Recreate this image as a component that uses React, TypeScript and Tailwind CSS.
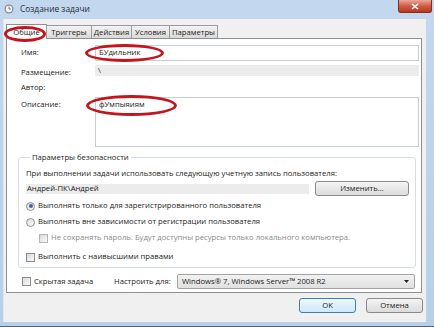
const TABS = [
  { label: 'Общие', w: 'w-[41px]', active: true },
  { label: 'Триггеры', w: 'w-[46px]' },
  { label: 'Действия', w: 'w-[41px]' },
  { label: 'Условия', w: 'w-[39px]' },
  { label: 'Параметры', w: 'w-[49px]' },
];

const Radio = ({ checked }: { checked?: boolean }) => (
  <span className="w-[9px] h-[9px] rounded-full border border-[#8c8c8c] bg-linear-to-br from-[#dcdcdc] to-[#fbfbfb] flex items-center justify-center shrink-0">
    {checked && <span className="w-[4px] h-[4px] rounded-full bg-[#3468a8]" />}
  </span>
);

const Check = ({ faded }: { faded?: boolean }) => (
  <span
    className={`w-[9px] h-[9px] border shrink-0 bg-linear-to-br from-[#dadada] to-[#fafafa] ${
      faded ? 'border-[#b4b4b4]' : 'border-[#8c8c8c]'
    }`}
  />
);

const Ellipse = ({ className }: { className: string }) => (
  <div className={`absolute z-20 rounded-[50%] border-[3px] border-[#c4141d] pointer-events-none ${className}`} />
);

export default function App() {
  return (
    <div className="relative w-[434px] h-[327px] overflow-hidden bg-linear-to-b from-[#c3d8ee] to-[#b7cfe8] font-['Open_Sans',sans-serif] text-[7.7px] leading-none text-[#1c1c1c] flex flex-col">
      {/* заголовок окна */}
      <div className="h-[19px] flex items-start shrink-0">
        <div className="flex items-center gap-[6px] pl-[4px] pt-[4px]">
          <svg width="10" height="10" viewBox="0 0 10 10">
            <circle cx="5" cy="5" r="4.5" fill="#8a8f96" />
            <circle cx="5" cy="5" r="3.2" fill="#f4f4f4" />
            <path d="M5 2.6V5h1.8" stroke="#555" strokeWidth="0.8" fill="none" />
          </svg>
          <span className="text-[8.4px] text-[#1e2a36]">Создание задачи</span>
        </div>
        <div className="ml-auto mr-[2px] w-[34px] h-[13px] rounded-b-[3px] border border-t-0 border-[#7b3024] bg-linear-to-b from-[#e6a89c] via-[#cf5b45] to-[#b9361f] flex items-center justify-center">
          <svg width="8" height="7" viewBox="0 0 8 7">
            <path d="M1 1l6 5M7 1L1 6" stroke="#fff" strokeWidth="1.6" />
          </svg>
        </div>
      </div>

      {/* тело окна */}
      <div className="flex-1 flex pl-[3px] pr-[8px] pb-[4px] border-b border-[#4d6580]">
        <div className="flex-1 bg-[#f0f0f0] border-l border-[#dfe8f2] flex flex-col pt-[5px] pl-[2px] pr-[3px] pb-[9px]">
          <div className="flex items-end h-[14px] relative z-10">
            {TABS.map((t) => (
              <div
                key={t.label}
                className={`${t.w} flex items-center justify-center border border-b-0 pt-[1px] ${
                  t.active
                    ? 'h-[15px] -mb-px bg-white border-[#8e8f8f]'
                    : 'h-[13px] bg-linear-to-b from-[#f3f3f3] to-[#dadada] border-[#9b9b9b] -ml-px'
                }`}
              >
                {t.label}
              </div>
            ))}
          </div>

          <div className="w-[416px] h-[255px] bg-white border border-[#8e8f8f] flex flex-col pl-[14px] pr-[2px]">
            <div className="flex items-center mt-[6px] h-[16px]">
              <span className="w-[74px]">Имя:</span>
              <div className="flex-1 h-full border border-[#c6ccd3] flex items-center pl-[3px]">БУдильник</div>
            </div>
            <div className="flex items-center mt-[4px] h-[11px]">
              <span className="w-[74px] pt-[4px]">Размещение:</span>
              <div className="flex-1 h-full bg-[#ececec] flex items-center pl-[3px]">\</div>
            </div>
            <div className="flex items-center mt-[6px] h-[12px]">
              <span className="w-[74px]">Автор:</span>
            </div>
            <div className="flex mt-[3px] h-[50px]">
              <span className="w-[74px] pt-[4px]">Описание:</span>
              <div className="flex-1 h-full border border-[#c6ccd3] pl-[3px] pt-[3px]">фУмпыяиям</div>
            </div>

            <fieldset className="mt-[4px] ml-[-3px] mr-[3px] border border-[#d5dde5] rounded-[3px] pl-[7px] pr-[6px] pb-[4px]">
              <legend className="ml-[4px] px-[2px] h-[12px] leading-[12px]">Параметры безопасности</legend>
              <div className="mt-[5px] h-[12px] flex items-center">
                При выполнении задачи использовать следующую учетную запись пользователя:
              </div>
              <div className="mt-[1px] h-[15px] flex items-center gap-[6px]">
                <div className="flex-1 h-[10px] bg-[#ececec] flex items-center pl-[1px]">Андрей-ПК\Андрей</div>
                <div className="w-[94px] h-full rounded-[3px] border border-[#8a8a8a] bg-linear-to-b from-[#f4f4f4] to-[#dcdcdc] flex items-center justify-center">
                  Изменить...
                </div>
              </div>
              <div className="mt-[4px] h-[12px] flex items-center gap-[3px]">
                <Radio checked />
                <span>Выполнять только для зарегистрированного пользователя</span>
              </div>
              <div className="mt-[4px] h-[12px] flex items-center gap-[3px]">
                <Radio />
                <span>Выполнять вне зависимости от регистрации пользователя</span>
              </div>
              <div className="mt-[4px] h-[12px] flex items-center gap-[3px] ml-[13px] text-[#8a8a8a]">
                <Check faded />
                <span>Не сохранять пароль. Будут доступны ресурсы только локального компьютера.</span>
              </div>
              <div className="mt-[7px] h-[12px] flex items-center gap-[3px]">
                <Check />
                <span>Выполнить с наивысшими правами</span>
              </div>
            </fieldset>

            <div className="mt-[6px] h-[15px] flex items-center pl-[1px] pr-[4px]">
              <Check />
              <span className="ml-[3px] w-[80px]">Скрытая задача</span>
              <span className="w-[63px]">Настроить для:</span>
              <div className="flex-1 h-full rounded-[2px] border border-[#a3a3a3] bg-linear-to-b from-[#f2f2f2] to-[#e0e0e0] flex items-center pl-[4px] pr-[5px]">
                <span className="flex-1">Windows® 7, Windows Server™ 2008 R2</span>
                <svg width="5" height="3" viewBox="0 0 5 3">
                  <path d="M0 0h5L2.5 3z" fill="#222" />
                </svg>
              </div>
            </div>
          </div>

          <div className="mt-[5px] flex justify-end gap-[10px]">
            <div className="w-[57px] h-[15px] rounded-[3px] border border-[#3c7fb1] bg-linear-to-b from-[#eef8fd] to-[#cde9f8] flex items-center justify-center">
              OK
            </div>
            <div className="w-[57px] h-[15px] rounded-[3px] border border-[#8a8a8a] bg-linear-to-b from-[#f4f4f4] to-[#dcdcdc] flex items-center justify-center">
              Отмена
            </div>
          </div>
        </div>
      </div>

      {/* красные пометки поверх скриншота */}
      <Ellipse className="left-[4px] top-[26px] w-[42px] h-[16px]" />
      <Ellipse className="left-[85px] top-[44px] w-[79px] h-[18px]" />
      <Ellipse className="left-[86px] top-[95px] w-[91px] h-[21px]" />
    </div>
  );
}
